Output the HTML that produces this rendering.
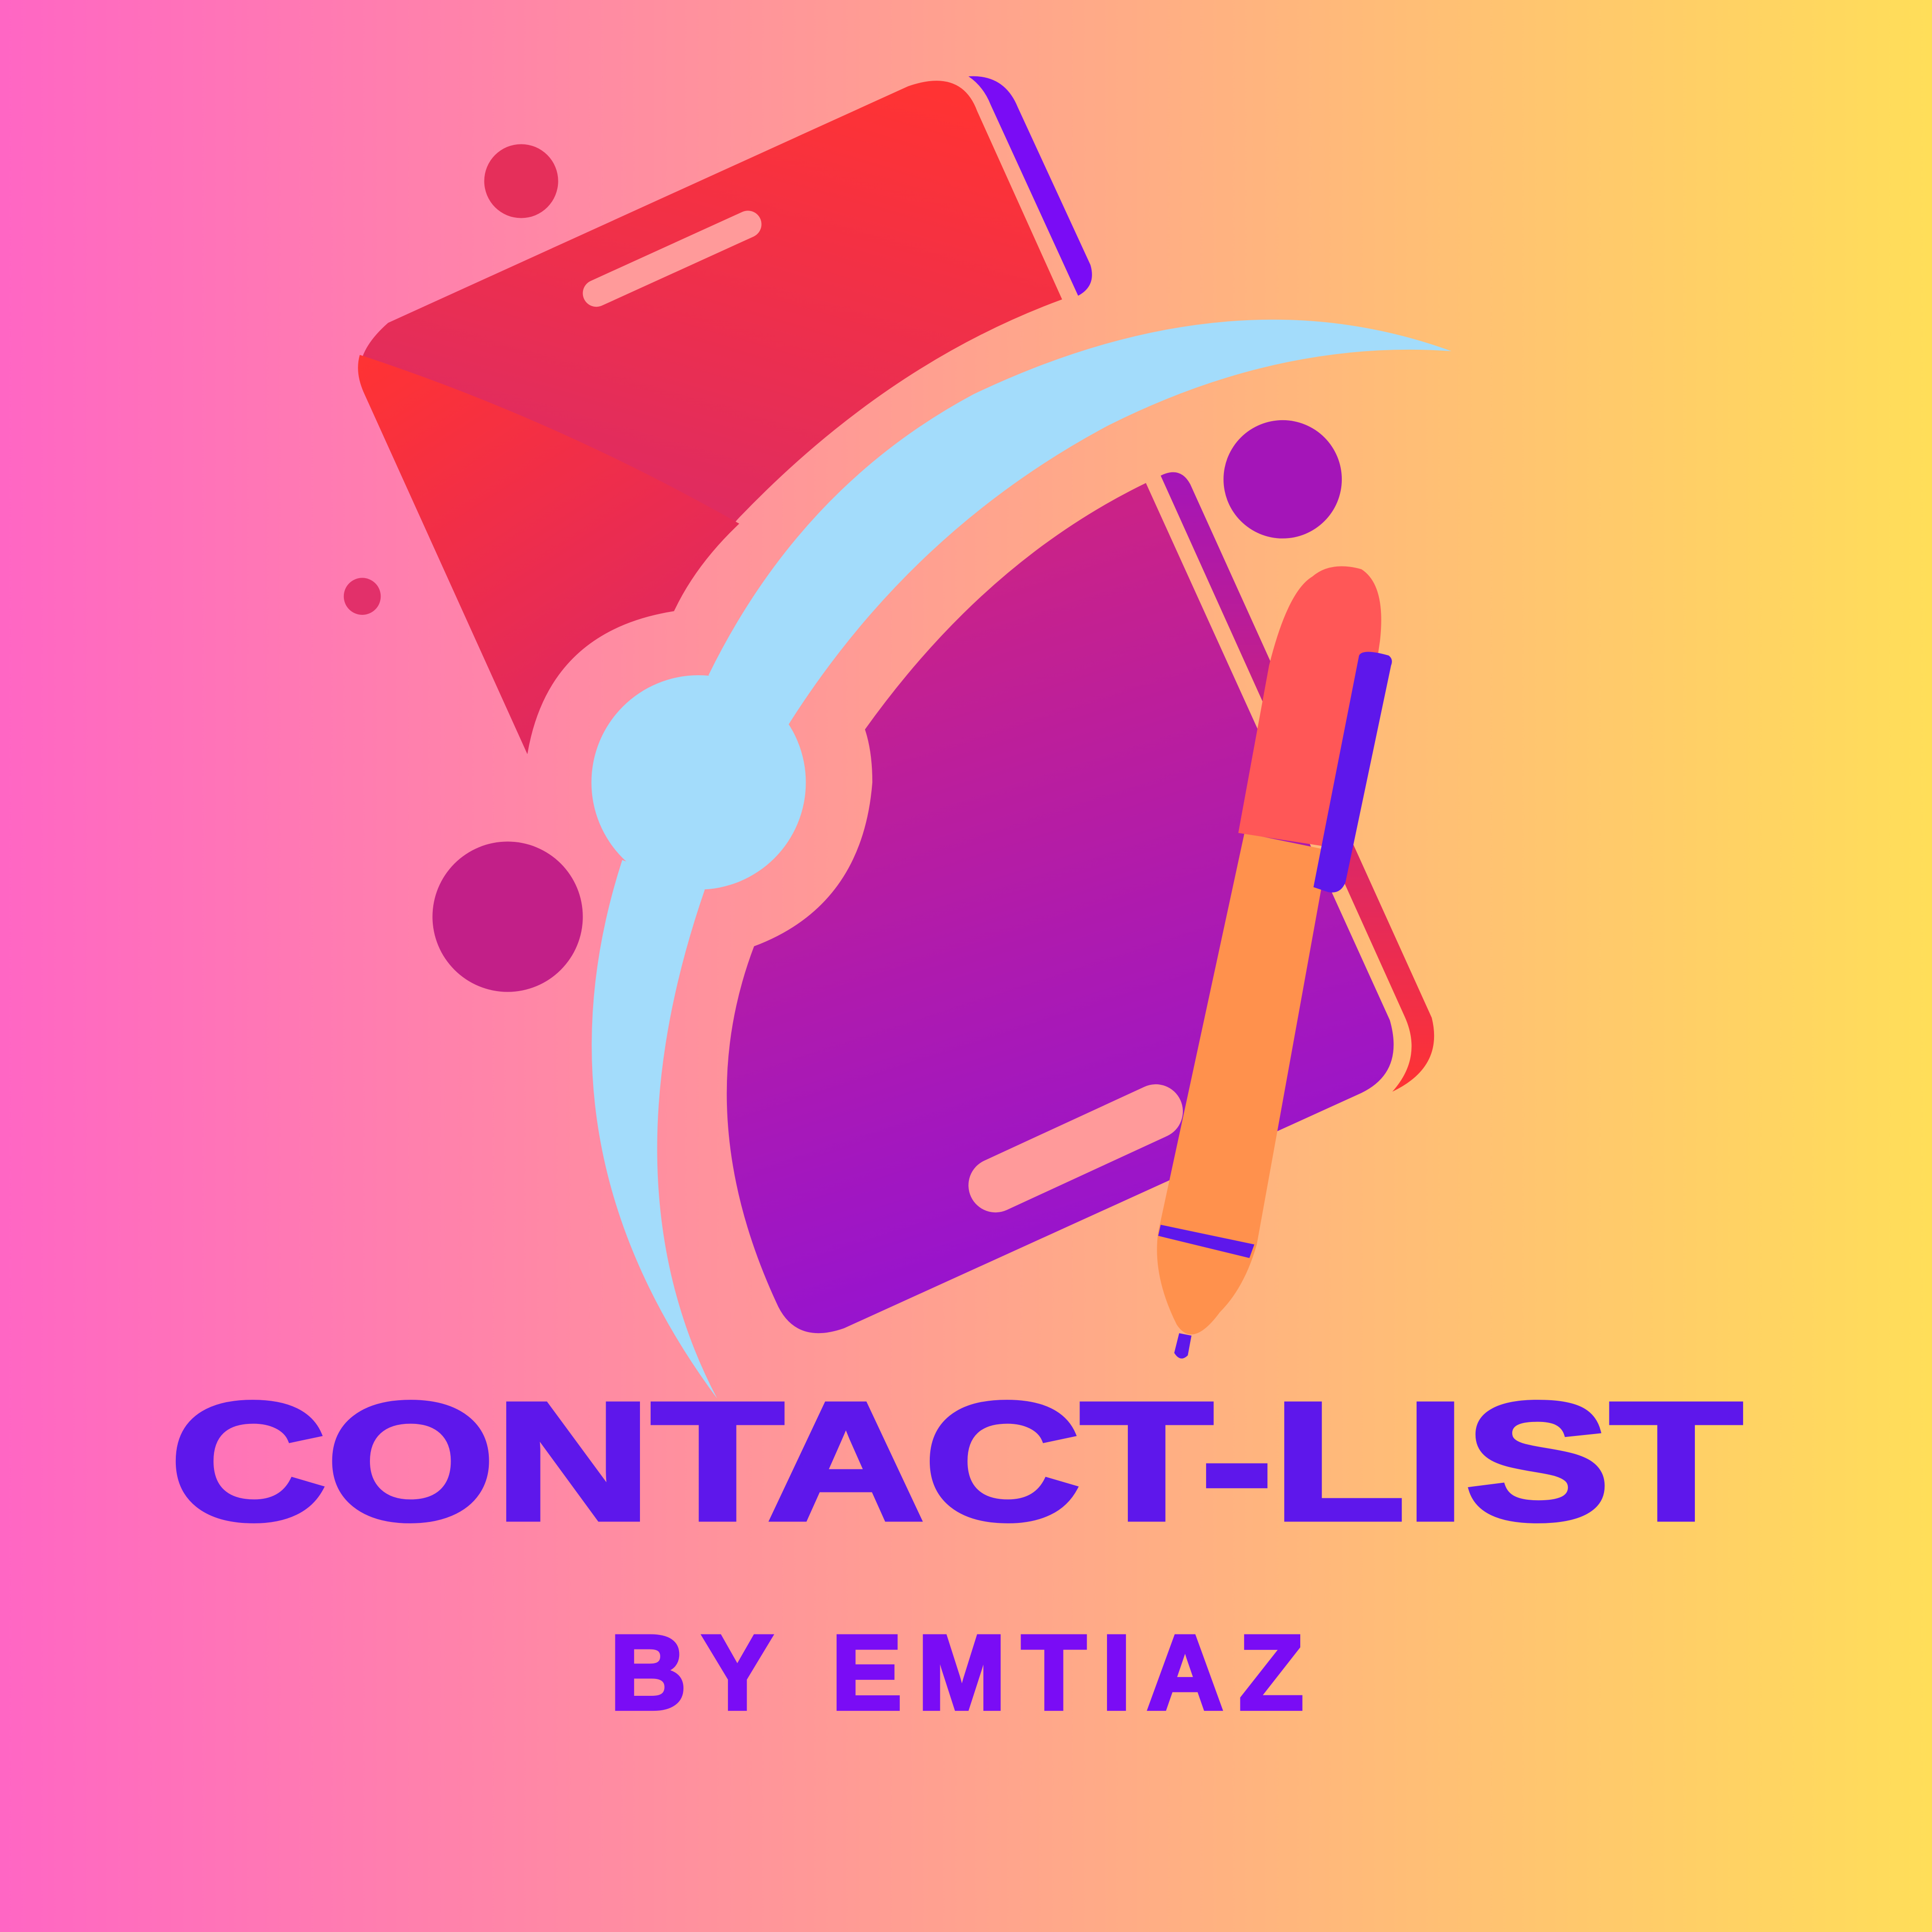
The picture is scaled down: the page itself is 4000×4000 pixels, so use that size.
<!DOCTYPE html>
<html><head><meta charset="utf-8"><style>
html,body{margin:0;padding:0;width:4000px;height:4000px;overflow:hidden}
svg{display:block}
</style></head><body>
<svg width="4000" height="4000" viewBox="0 0 1568 1568" xmlns="http://www.w3.org/2000/svg">
<defs>
<linearGradient id="bg" x1="0" y1="0" x2="1" y2="0"><stop offset="0" stop-color="#ff66c4"/><stop offset="1" stop-color="#ffde59"/></linearGradient>
<linearGradient id="c1" x1="0.75" y1="0" x2="0.45" y2="1"><stop offset="0" stop-color="#ff3333"/><stop offset="1" stop-color="#cf2878"/></linearGradient>
<linearGradient id="c1b" x1="0" y1="0" x2="0.6" y2="1"><stop offset="0" stop-color="#ff3333"/><stop offset="1" stop-color="#de2862"/></linearGradient>
<linearGradient id="c2" x1="0.3" y1="0" x2="0.55" y2="1"><stop offset="0" stop-color="#d0247f"/><stop offset="1" stop-color="#9212d6"/></linearGradient>
<linearGradient id="s2" x1="0" y1="0" x2="0" y2="1"><stop offset="0" stop-color="#a415b8"/><stop offset="1" stop-color="#ff3333"/></linearGradient>
</defs>
<rect width="1568" height="1568" fill="url(#bg)"/>
<path d="M315 262 L737 70 Q780 55 793 90 L862 243 Q720 295 600 420 Q565 458 547 496 Q445 512 428 612 L295 318 Q283 290 315 262 Z" fill="url(#c1)"/>
<path d="M292 288 Q450 340 600 425 Q565 458 547 496 Q445 512 428 612 L295 318 Q288 302 292 288 Z" fill="url(#c1b)"/>
<path d="M786 62 Q815 60 826 87 L885 215 Q890 232 875 240 L804 85 Q798 70 786 62 Z" fill="#7a0cf5"/>
<line x1="484" y1="238" x2="607" y2="182" stroke="#ff9a9a" stroke-width="22" stroke-linecap="round"/>
<path d="M930 392 L1128 828 Q1140 870 1105 887 L685 1078 Q645 1092 630 1057 Q560 905 612 768 Q700 735 708 635 Q708 610 702 592 Q800 455 930 392 Z" fill="url(#c2)"/>
<path d="M942 386 Q958 378 966 393 L1162 826 Q1172 866 1130 886 Q1155 858 1140 825 Z" fill="url(#s2)"/>
<line x1="808" y1="962" x2="938" y2="902" stroke="#ff9a9a" stroke-width="44" stroke-linecap="round"/>
<circle cx="423" cy="147" r="30" fill="#e52f5a"/>
<circle cx="294" cy="484" r="15" fill="#e2306a"/>
<circle cx="412" cy="744" r="61" fill="#c21f88"/>
<circle cx="1041" cy="389" r="48" fill="#a415b8"/>
<g fill="#a3dcfb">
<path d="M1178 285 Q1000 220 790 320 Q650 395 575 548 L640 588 Q740 430 900 345 Q1040 275 1178 285 Z"/>
<circle cx="567" cy="635" r="87"/>
<path d="M505 698 Q430 930 582 1135 Q490 960 572 722 Z"/>
</g>
<path d="M1010 676 L1078 690 L1020 1010 Q1010 1045 990 1065 Q968 1095 955 1075 Q935 1035 940 1000 Z" fill="#ff914d"/>
<path d="M957 1082 L967 1084 L964 1100 Q958 1106 953 1098 Z" fill="#5e17eb"/>
<path d="M1005 676 L1030 540 Q1045 480 1065 468 Q1080 455 1105 462 Q1125 475 1120 520 L1095 690 Z" fill="#ff5757"/>
<path d="M1103 532 Q1106 526 1127 532 Q1131 535 1129 540 L1092 716 Q1088 726 1078 724 L1066 720 Z" fill="#5e17eb"/>
<path d="M942 994 L1018 1010 L1014 1021 L940 1003 Z" fill="#5e17eb"/>
<text x="138" y="1233" font-family="Liberation Sans, sans-serif" font-weight="bold" font-size="136" fill="#5e17eb" stroke="#5e17eb" stroke-width="4" textLength="1276" lengthAdjust="spacingAndGlyphs">CONTACT-LIST</text>
<text x="495" y="1387" font-family="Liberation Sans, sans-serif" font-weight="bold" font-size="86" fill="#7a0cf5" stroke="#7a0cf5" stroke-width="3" textLength="563" lengthAdjust="spacing">BY EMTIAZ</text>
</svg>
</body></html>
